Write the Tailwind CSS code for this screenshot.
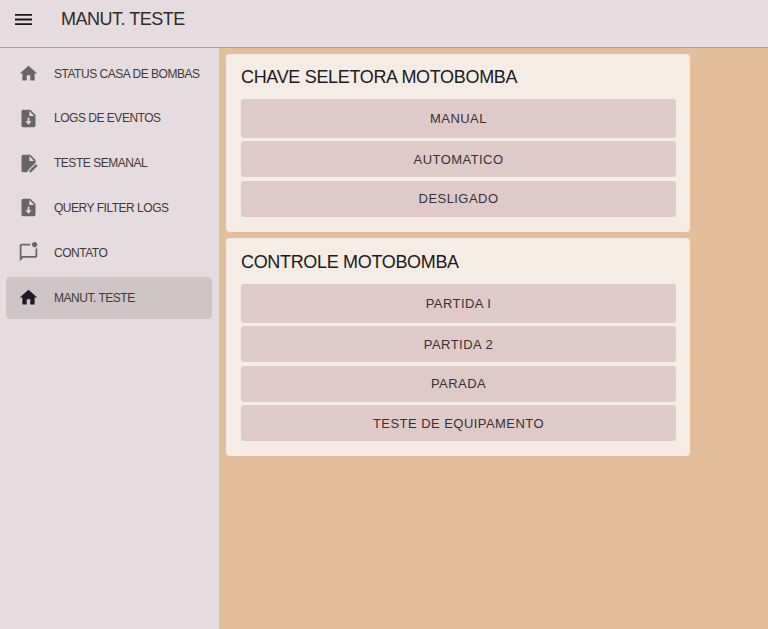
<!DOCTYPE html>
<html lang="en">
  <head>
    <meta charset="UTF-8" />
    <meta name="viewport" content="width=device-width, initial-scale=1.0" />
    <title>Manut. Teste</title>
    <script src="https://cdn.jsdelivr.net/npm/@tailwindcss/browser@4"></script>
  </head>
  <body class="h-[629px] overflow-hidden flex flex-col bg-[#e4bf9b] font-['Liberation_Sans',Arial,sans-serif]">
    <header class="h-[48px] shrink-0 flex bg-[#e6dcdf] border-b border-[#a89f9f] pl-[15px]">
      <svg class="w-[17px] h-[11px] mt-[14px] text-[#1c1618]" viewBox="3 6 18 12" preserveAspectRatio="none" fill="currentColor">
        <path d="M3 18h18v-2H3v2zm0-5h18v-2H3v2zm0-7v2h18V6H3z" />
      </svg>
      <div class="ml-[29px] mt-[7px] text-[18px] tracking-[-0.5px] leading-[24px] text-[#2f2a2b]">MANUT. TESTE</div>
    </header>
    <div class="flex flex-1 min-h-0">
      <nav class="w-[219px] shrink-0 bg-[#e6dcdf] pl-[6px] pr-[7px] pt-[4.6px] flex flex-col gap-[2.8px] text-[12px] tracking-[-0.48px] text-[#3f393a]">
        <a class="h-[42px] flex items-center pl-[12px] rounded">
          <svg class="w-[21px] h-[21px] mr-[15px] text-[#6b6466]" viewBox="0 0 24 24" fill="currentColor"><path d="M10 20v-6h4v6h5v-8h3L12 3 2 12h3v8z" /></svg>
          STATUS CASA DE BOMBAS
        </a>
        <a class="h-[42px] flex items-center pl-[12px] rounded">
          <svg class="w-[21px] h-[21px] mr-[15px] text-[#6b6466]" viewBox="0 0 24 24" fill="currentColor"><path fill-rule="evenodd" d="M6 2h8l6 6v12c0 1.1-.9 2-2 2H6c-1.1 0-2-.9-2-2V4c0-1.1.9-2 2-2zm5 9v4H8.500l3.500 4 3.500-4H13v-4h-2zm2-7.500V9h5.500L13 3.500z" /></svg>
          LOGS DE EVENTOS
        </a>
        <a class="h-[42px] flex items-center pl-[12px] rounded">
          <svg class="w-[21px] h-[21px] mr-[15px] text-[#6b6466]" viewBox="0 0 24 24" fill="currentColor"><path d="M6 2h8l6 6v3.200l-9 9V22H6c-1.100 0-2-.9-2-2V4c0-1.100.9-2 2-2zM13 3.500V9h5.500L13 3.500zM13 22v-2l7.500-7.500 2 2L15 22h-2z" /></svg>
          TESTE SEMANAL
        </a>
        <a class="h-[42px] flex items-center pl-[12px] rounded">
          <svg class="w-[21px] h-[21px] mr-[15px] text-[#6b6466]" viewBox="0 0 24 24" fill="currentColor"><path fill-rule="evenodd" d="M6 2h8l6 6v12c0 1.1-.9 2-2 2H6c-1.1 0-2-.9-2-2V4c0-1.1.9-2 2-2zm5 9v4H8.500l3.500 4 3.500-4H13v-4h-2zm2-7.500V9h5.500L13 3.500z" /></svg>
          QUERY FILTER LOGS
        </a>
        <a class="h-[42px] flex items-center pl-[12px] rounded">
          <svg class="w-[21px] h-[21px] mr-[15px] text-[#6b6466]" viewBox="0 0 24 24" fill="currentColor"><path d="M22 6.980V16c0 1.100-.9 2-2 2H6l-4 4V4c0-1.100.9-2 2-2h10.100c-.06.32-.1.66-.1 1s.04.68.1 1H4v12h16V7.900c.74-.15 1.420-.48 2-.92zM16 3c0 1.660 1.340 3 3 3s3-1.340 3-3-1.340-3-3-3-3 1.340-3 3z" /></svg>
          CONTATO
        </a>
        <a class="h-[42px] flex items-center pl-[12px] rounded bg-[#cfc5c7]">
          <svg class="w-[21px] h-[21px] mr-[15px] text-[#1d1a26]" viewBox="0 0 24 24" fill="currentColor"><path d="M10 20v-6h4v6h5v-8h3L12 3 2 12h3v8z" /></svg>
          MANUT. TESTE
        </a>
      </nav>
      <main class="w-[464px] ml-[7px] pt-[6px] flex flex-col gap-[6px]">
        <section class="h-[178px] bg-[#f5ece6] rounded px-[15px] pt-[11px]">
          <h2 class="text-[18px] tracking-[-0.33px] leading-[24px] text-[#1c1a1a]">CHAVE SELETORA MOTOBOMBA</h2>
          <div class="mt-[10px] w-[435px] flex flex-col gap-[3.5px] text-[13px] tracking-[0.45px] text-[#3a3031]">
            <button class="h-[38.5px] pt-[1px] bg-[#e0cac9] rounded-[3px]">MANUAL</button>
            <button class="h-[36px] pt-[1px] bg-[#e0cac9] rounded-[3px]">AUTOMATICO</button>
            <button class="h-[36px] pt-[1px] bg-[#e0cac9] rounded-[3px]">DESLIGADO</button>
          </div>
        </section>
        <section class="h-[218px] bg-[#f5ece6] rounded px-[15px] pt-[12px]">
          <h2 class="text-[18px] tracking-[-0.33px] leading-[24px] text-[#1c1a1a]">CONTROLE MOTOBOMBA</h2>
          <div class="mt-[10px] w-[435px] flex flex-col gap-[3.5px] text-[13px] tracking-[0.45px] text-[#3a3031]">
            <button class="h-[38.5px] pt-[1px] bg-[#e0cac9] rounded-[3px]">PARTIDA I</button>
            <button class="h-[36px] pt-[1px] bg-[#e0cac9] rounded-[3px]">PARTIDA 2</button>
            <button class="h-[36px] pt-[1px] bg-[#e0cac9] rounded-[3px]">PARADA</button>
            <button class="h-[36px] pt-[1px] bg-[#e0cac9] rounded-[3px]">TESTE DE EQUIPAMENTO</button>
          </div>
        </section>
      </main>
    </div>
  </body>
</html>
